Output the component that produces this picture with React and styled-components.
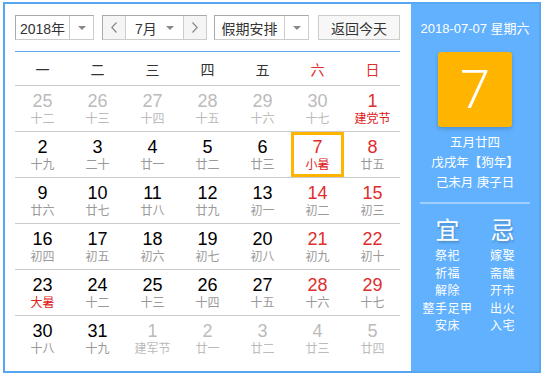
import React from "react";
import styled, { createGlobalStyle } from "styled-components";

const GlobalStyle = createGlobalStyle`
  body {
    margin: 0;
    background: #fff;
    font-family: "Liberation Sans", "Noto Sans CJK SC", sans-serif;
  }
`;

const Widget = styled.div`
  margin: 2px 0 0 3px;
  width: 538px;
  height: 371px;
  box-sizing: border-box;
  border: 2px solid #57a6f2;
  display: flex;
`;

const LeftPanel = styled.div`
  width: 406px;
  padding: 11px 11px 0 10px;
  box-sizing: border-box;
`;

const Toolbar = styled.div`
  display: flex;
  height: 25px;
  margin-bottom: 11px;
`;

const Select = styled.div`
  display: flex;
  width: ${(p) => p.$w}px;
  height: 25px;
  box-sizing: border-box;
  border: 1px solid #ccc;
  border-top-color: #a9a9a9;
  border-left-color: #a9a9a9;
  margin-right: ${(p) => p.$mr || 0}px;
  font-size: 14px;
  color: #333;
  background: #fff;
`;

const SelectText = styled.div`
  flex: 1;
  display: flex;
  align-items: center;
  justify-content: center;
  border-right: 1px solid #ccc;
`;

const Arrow = styled.div`
  width: 23px;
  display: flex;
  align-items: center;
  justify-content: center;
  &::after {
    content: "";
    border-left: 4px solid transparent;
    border-right: 4px solid transparent;
    border-top: 4px solid #888;
  }
`;

const MonthGroup = styled.div`
  display: flex;
  width: 105px;
  height: 25px;
  box-sizing: border-box;
  border: 1px solid #ccc;
  border-top-color: #a9a9a9;
  border-left-color: #a9a9a9;
  margin-right: 7px;
  font-size: 14px;
  color: #333;
`;

const NavButton = styled.div`
  width: 22px;
  background: #f5f5f5;
  display: flex;
  align-items: center;
  justify-content: center;
  ${(p) => (p.$side === "left" ? "border-right: 1px solid #ccc;" : "border-left: 1px solid #ccc;")}
`;

const MonthValue = styled.div`
  flex: 1;
  display: flex;
  align-items: center;
  padding-left: 9px;
  justify-content: space-between;
`;

const SmallArrow = styled.span`
  margin-right: 9px;
  border-left: 4px solid transparent;
  border-right: 4px solid transparent;
  border-top: 4px solid #888;
`;

const TodayButton = styled.div`
  width: 82px;
  height: 25px;
  box-sizing: border-box;
  border: 1px solid #ccc;
  background: #f7f7f7;
  display: flex;
  align-items: center;
  justify-content: center;
  font-size: 14px;
  color: #333;
`;

const Table = styled.div`
  width: 385px;
  border-top: 1px solid #5aa6f0;
`;

const WeekHead = styled.div`
  display: grid;
  grid-template-columns: repeat(7, 55px);
  height: 33px;
  border-bottom: 1px solid #ccc;
`;

const WeekName = styled.div`
  display: flex;
  align-items: center;
  justify-content: center;
  font-size: 14px;
  color: ${(p) => (p.$weekend ? "#e02d2d" : "#333")};
`;

const Row = styled.div`
  display: grid;
  grid-template-columns: repeat(7, 55px);
  height: 45px;
  border-bottom: ${(p) => (p.$last ? "none" : "1px solid #ccc")};
`;

const Cell = styled.div`
  display: flex;
  flex-direction: column;
  align-items: center;
  justify-content: center;
  margin: 0 1px;
  box-sizing: border-box;
  border: 3px solid ${(p) => (p.$selected ? "#ffb400" : "transparent")};
`;

const DayNum = styled.div`
  font-size: 18px;
  line-height: 20px;
  color: ${(p) => p.$color};
`;

const Lunar = styled.div`
  font-size: 12px;
  line-height: 14px;
  margin-top: 1px;
  color: ${(p) => p.$color};
`;

const RightPanel = styled.div`
  flex: 1;
  background: #61b1fe;
  color: #fff;
  display: flex;
  flex-direction: column;
  align-items: center;
  padding-top: 16px;
`;

const DateLine = styled.div`
  font-size: 13px;
  line-height: 18px;
`;

const BigDay = styled.div`
  margin-top: 14px;
  width: 74px;
  height: 75px;
  background: #ffb500;
  border-radius: 3px;
  box-shadow: 0 2px 4px rgba(0, 0, 0, 0.18);
  display: flex;
  align-items: center;
  justify-content: center;
  font-family: Roboto, "Liberation Sans", sans-serif;
  font-weight: 300;
  font-size: 54px;
`;

const LunarInfo = styled.div`
  margin-top: 6px;
  font-size: 12.5px;
  line-height: 20px;
  text-align: center;
`;

const Divider = styled.div`
  margin-top: 9px;
  width: 110px;
  height: 2px;
  background: rgba(255, 255, 255, 0.4);
`;

const Advice = styled.div`
  margin-top: 13px;
  display: grid;
  grid-template-columns: 55px 55px;
`;

const AdviceColumn = styled.div`
  display: flex;
  flex-direction: column;
  align-items: center;
`;

const AdviceTitle = styled.div`
  font-size: 24px;
  line-height: 28px;
  text-shadow: 1px 2px 2px rgba(0, 0, 0, 0.2);
  margin-bottom: 3px;
`;

const AdviceItem = styled.div`
  font-size: 12px;
  letter-spacing: 0.5px;
  line-height: 17.5px;
`;

const Chevron = ({ dir }) => (
  <svg width="6" height="11" viewBox="0 0 6 11">
    <polyline
      points={dir === "left" ? "5.5,0.5 0.8,5.5 5.5,10.5" : "0.5,0.5 5.2,5.5 0.5,10.5"}
      fill="none"
      stroke="#888"
      strokeWidth="1.2"
    />
  </svg>
);

const weekNames = ["一", "二", "三", "四", "五", "六", "日"];

// [day, lunar, other month, highlighted label]
const weeks = [
  [[25, "十二", 1], [26, "十三", 1], [27, "十四", 1], [28, "十五", 1], [29, "十六", 1], [30, "十七", 1], [1, "建党节", 0, 1]],
  [[2, "十九"], [3, "二十"], [4, "廿一"], [5, "廿二"], [6, "廿三"], [7, "小暑", 0, 1], [8, "廿五"]],
  [[9, "廿六"], [10, "廿七"], [11, "廿八"], [12, "廿九"], [13, "初一"], [14, "初二"], [15, "初三"]],
  [[16, "初四"], [17, "初五"], [18, "初六"], [19, "初七"], [20, "初八"], [21, "初九"], [22, "初十"]],
  [[23, "大暑", 0, 1], [24, "十二"], [25, "十三"], [26, "十四"], [27, "十五"], [28, "十六"], [29, "十七"]],
  [[30, "十八"], [31, "十九"], [1, "建军节", 1], [2, "廿一", 1], [3, "廿二", 1], [4, "廿三", 1], [5, "廿四", 1]],
];

const good = ["祭祀", "祈福", "解除", "整手足甲", "安床"];
const bad = ["嫁娶", "斋醮", "开市", "出火", "入宅"];

const App = () => {
  return (
    <>
      <GlobalStyle />
      <Widget>
        <LeftPanel>
          <Toolbar>
            <Select $w={79} $mr={8}>
              <SelectText>2018年</SelectText>
              <Arrow />
            </Select>
            <MonthGroup>
              <NavButton $side="left">
                <Chevron dir="left" />
              </NavButton>
              <MonthValue>
                7月
                <SmallArrow />
              </MonthValue>
              <NavButton $side="right">
                <Chevron dir="right" />
              </NavButton>
            </MonthGroup>
            <Select $w={95} $mr={9}>
              <SelectText>假期安排</SelectText>
              <Arrow />
            </Select>
            <TodayButton>返回今天</TodayButton>
          </Toolbar>
          <Table>
            <WeekHead>
              {weekNames.map((n, i) => (
                <WeekName key={n} $weekend={i >= 5}>
                  {n}
                </WeekName>
              ))}
            </WeekHead>
            {weeks.map((week, wi) => (
              <Row key={wi} $last={wi === weeks.length - 1}>
                {week.map(([day, lunar, other, mark], di) => {
                  const weekend = di >= 5;
                  const numColor = other ? "#bbb" : weekend ? "#e02d2d" : "#000";
                  const lunarColor = other ? "#bbb" : mark ? "#e02020" : "#999";
                  return (
                    <Cell key={di} $selected={wi === 1 && di === 5}>
                      <DayNum $color={numColor}>{day}</DayNum>
                      <Lunar $color={lunarColor}>{lunar}</Lunar>
                    </Cell>
                  );
                })}
              </Row>
            ))}
          </Table>
        </LeftPanel>
        <RightPanel>
          <DateLine>2018-07-07 星期六</DateLine>
          <BigDay>7</BigDay>
          <LunarInfo>
            <div>五月廿四</div>
            <div>戊戌年【狗年】</div>
            <div>己未月 庚子日</div>
          </LunarInfo>
          <Divider />
          <Advice>
            <AdviceColumn>
              <AdviceTitle>宜</AdviceTitle>
              {good.map((g) => (
                <AdviceItem key={g}>{g}</AdviceItem>
              ))}
            </AdviceColumn>
            <AdviceColumn>
              <AdviceTitle>忌</AdviceTitle>
              {bad.map((b) => (
                <AdviceItem key={b}>{b}</AdviceItem>
              ))}
            </AdviceColumn>
          </Advice>
        </RightPanel>
      </Widget>
    </>
  );
};

export default App;
